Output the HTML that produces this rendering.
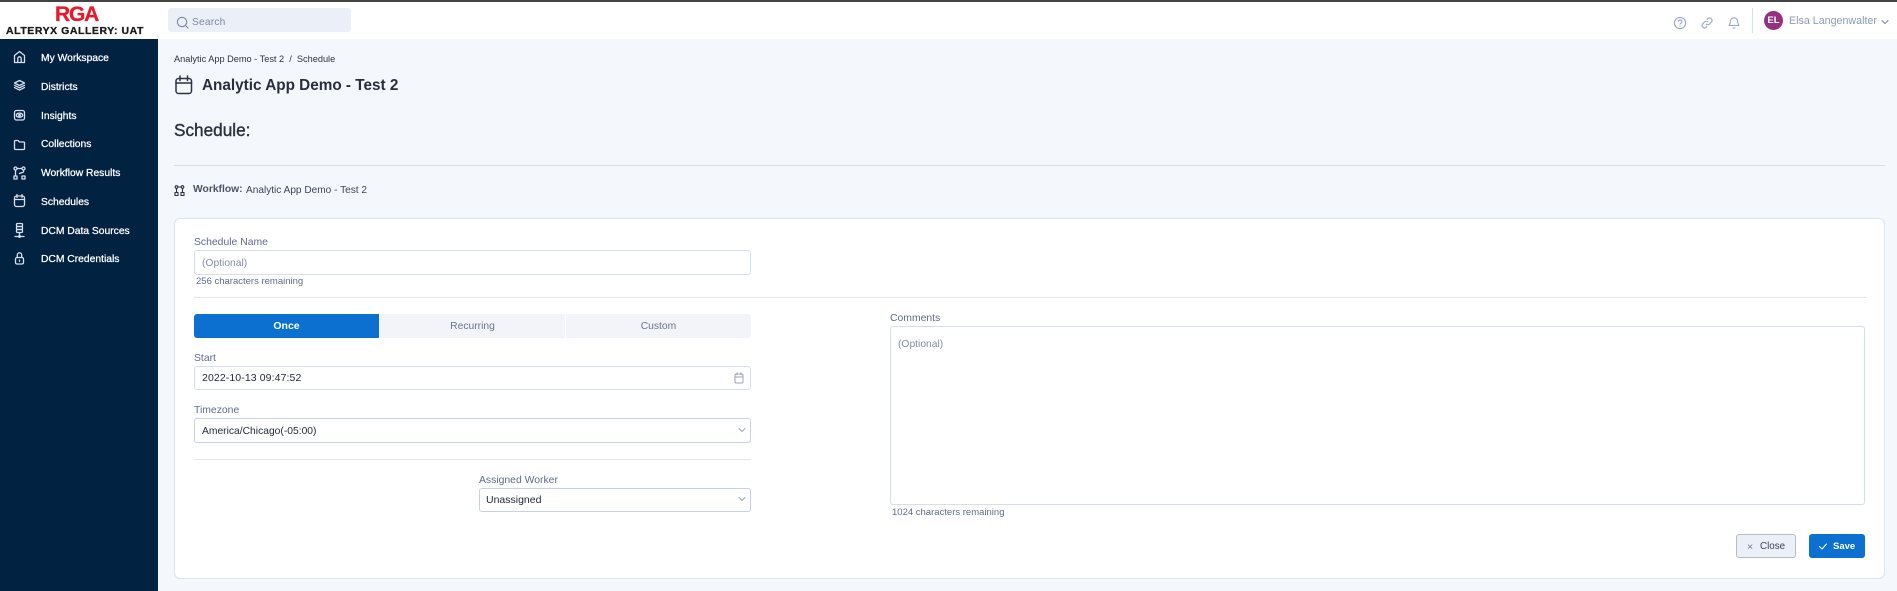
<!DOCTYPE html>
<html><head><meta charset="utf-8"><style>
html,body{margin:0;padding:0;width:1897px;height:591px;overflow:hidden;background:#f4f7fc;font-family:"Liberation Sans",sans-serif}
.a{position:absolute;white-space:nowrap}
.t{position:absolute;white-space:nowrap;line-height:14px}
.nav{color:#fff;font-size:10.300px;-webkit-text-stroke:.25px #fff;left:41px}
.lab{color:#5f6b8c;font-size:10.400px}
.box{position:absolute;box-sizing:border-box;background:#fff;border:1px solid #d5deee;border-radius:3px}
.hr{position:absolute;height:1px;background:#e3e6ee}
svg{position:absolute;fill:none;stroke-linecap:round;stroke-linejoin:round}
.nv{stroke:#d8e0ec;stroke-width:1.300;left:11px}
</style></head><body>
<div class="a" style="left:0;top:0;width:1897px;height:39px;background:#fff"></div>
<div class="a" style="left:0;top:0;width:1897px;height:2px;background:#444"></div>
<div class="t" style="left:55px;top:3px;font-size:21px;line-height:24px;font-weight:bold;color:#e8192c;letter-spacing:-1.200px;-webkit-text-stroke:.3px #e8192c">RGA</div>
<div class="t" style="left:6px;top:24px;font-size:10.500px;font-weight:bold;color:#1a1a1a;letter-spacing:.55px;line-height:14px;-webkit-text-stroke:.3px #1a1a1a">ALTERYX GALLERY: UAT</div>
<div class="a" style="left:168px;top:8px;width:183px;height:24px;background:#ebeff8;border-radius:3px"></div>
<svg style="left:176px;top:16px" width="13" height="13" viewBox="0 0 13 13" stroke="#7d89a3" stroke-width="1.100"><circle cx="6" cy="6" r="4.700"/><path d="M9.500 9.500 12 12"/></svg>
<div class="t" style="left:192px;top:16px;font-size:10.200px;color:#7d89a3;letter-spacing:.2px">Search</div>

<svg style="left:1673px;top:16px" width="14" height="14" viewBox="0 0 14 14" stroke="#9aa8c2" stroke-width="1.100"><circle cx="7" cy="7" r="5.600"/><path d="M5.400 5.600a1.700 1.700 0 1 1 2.400 1.600c-.5.3-.8.6-.8 1.100M7 10.100v.1"/></svg>
<svg style="left:1700px;top:16px" width="14" height="14" viewBox="0 0 14 14" stroke="#9aa8c2" stroke-width="1.100"><path d="M6 8a2.400 2.400 0 0 0 3.500 0l2-2A2.500 2.500 0 0 0 8 2.500l-.8.8M8 6a2.400 2.400 0 0 0-3.500 0l-2 2A2.500 2.500 0 0 0 6 11.500l.8-.8"/></svg>
<svg style="left:1727px;top:15px" width="14" height="15" viewBox="0 0 14 15" stroke="#9aa8c2" stroke-width="1.100"><path d="M2 10.500h10c-1-1-1.300-2-1.300-4a3.700 3.700 0 0 0-7.400 0c0 2-.3 3-1.300 4zM6 13h2"/></svg>
<div class="a" style="left:1752px;top:8px;width:1px;height:25px;background:#d8dfec"></div>
<div class="a" style="left:1764px;top:11px;width:19px;height:19px;border-radius:50%;background:#94307f;color:#fff;font-size:9.500px;font-weight:bold;line-height:19px;text-align:center">EL</div>
<div class="t" style="left:1789px;top:14px;font-size:10.700px;color:#8d9bb8">Elsa Langenwalter</div>
<svg style="left:1881px;top:19px" width="8" height="6" viewBox="0 0 8 6" stroke="#7d89a3" stroke-width="1.100"><path d="M1 1.500 4 4.500 7 1.500"/></svg>

<div class="a" style="left:0;top:39px;width:158px;height:552px;background:#012241"></div>
<svg class="nv" style="top:49px" width="17" height="16" viewBox="0 0 17 16"><path d="M3.500 13.500V6.500L8.500 2.500 13.500 6.500V13.500zM6.800 13.500V9.500a1.700 1.700 0 0 1 3.400 0V13.500"/></svg>
<svg class="nv" style="top:78px" width="17" height="15" viewBox="0 0 17 15" stroke-width="1.100"><path d="M8.500 2.500 13.500 5 8.500 7.500 3.500 5zM3.500 7.300l5 2.500 5-2.500M3.500 9.600l5 2.500 5-2.500"/></svg>
<svg class="nv" style="top:108px" width="17" height="15" viewBox="0 0 17 15"><rect x="3.500" y="2.500" width="10" height="9.500" rx="2"/><ellipse cx="8.500" cy="7.200" rx="3.200" ry="2.100"/><circle cx="8.500" cy="7.200" r=".8"/></svg>
<svg class="nv" style="top:137px" width="17" height="15" viewBox="0 0 17 15"><path d="M3.500 4.500a1 1 0 0 1 1-1h2.500l1.500 1.500H12.500a1 1 0 0 1 1 1V11.500a1 1 0 0 1-1 1H4.500a1 1 0 0 1-1-1z"/></svg>
<svg class="nv" style="top:165px" width="17" height="17" viewBox="0 0 17 17" stroke-width="1.200"><circle cx="4.500" cy="3.500" r="1.500"/><circle cx="12.500" cy="3.500" r="1.500"/><rect x="3" y="11" width="3" height="3"/><rect x="11" y="11" width="3" height="3"/><path d="M4.500 5.500V10M12.500 5.500V7l-4 1.500M6.500 3.500h4"/></svg>
<svg class="nv" style="top:193px" width="17" height="16" viewBox="0 0 17 16"><rect x="3.500" y="3" width="10" height="10.500" rx="2"/><path d="M3.500 6.500h10M6 1.500v3M11 1.500v3"/></svg>
<svg class="nv" style="top:222px" width="17" height="17" viewBox="0 0 17 17" stroke-width="1.100"><rect x="5.500" y="1.500" width="6" height="3" rx="1"/><rect x="5.500" y="4.500" width="6" height="3" rx="1"/><rect x="5.500" y="7.500" width="6" height="3" rx="1"/><path d="M8.500 10.500V13M4 14.500h9"/><circle cx="8.500" cy="14.500" r=".8"/></svg>
<svg class="nv" style="top:250px" width="17" height="17" viewBox="0 0 17 17"><rect x="4.500" y="7.500" width="8" height="6.500" rx="1.500"/><path d="M6.300 7.500V5a2.200 2.200 0 0 1 4.400 0v2.500M8.500 10.200v1"/></svg>
<div class="t nav" style="top:52px">My Workspace</div>
<div class="t nav" style="top:81px">Districts</div>
<div class="t nav" style="top:110px">Insights</div>
<div class="t nav" style="top:138px">Collections</div>
<div class="t nav" style="top:167px">Workflow Results</div>
<div class="t nav" style="top:196px">Schedules</div>
<div class="t nav" style="top:225px">DCM Data Sources</div>
<div class="t nav" style="top:253px">DCM Credentials</div>

<div class="t" style="left:174px;top:52px;font-size:9.200px;color:#2c3345">Analytic App Demo - Test 2&nbsp; /&nbsp; Schedule</div>
<svg style="left:174px;top:75px" width="20" height="20" viewBox="0 0 20 20" stroke="#2b3343" stroke-width="1.500"><rect x="2" y="3.500" width="15.500" height="15" rx="2.500"/><path d="M2 8h15.500M6 1v4.500M13.500 1v4.500"/></svg>
<div class="t" style="left:202px;top:75px;font-size:15.300px;line-height:22px;font-weight:bold;color:#272e3d">Analytic App Demo - Test 2</div>
<div class="t" style="left:174px;top:118px;font-size:17.200px;line-height:24px;color:#2a3140;-webkit-text-stroke:.4px #2a3140">Schedule:</div>
<div class="hr" style="left:174px;top:165px;width:1711px;background:#d9dee7"></div>
<svg style="left:174px;top:185px" width="11" height="11" viewBox="0 0 11 11" stroke="#2b3343" stroke-width="1.100"><circle cx="2.500" cy="2" r="1.300"/><circle cx="8.500" cy="2" r="1.300"/><rect x="1" y="7.500" width="3" height="3"/><rect x="7" y="7.500" width="3" height="3"/><path d="M2.500 3.500v4M8.500 3.500v4M4 2h3"/></svg>
<div class="t" style="left:193px;top:183px;font-size:10.300px;font-weight:bold;color:#4b5468">Workflow:</div>
<div class="t" style="left:246px;top:184px;font-size:10.100px;color:#3c4458">Analytic App Demo - Test 2</div>

<div class="box" style="left:174px;top:218px;width:1711px;height:361px;border-radius:6px;border-color:#dce4f1"></div>

<div class="t lab" style="left:194px;top:236px">Schedule Name</div>
<div class="box" style="left:194px;top:250px;width:557px;height:25px"></div>
<div class="t" style="left:202px;top:257px;font-size:10.300px;color:#848d9f">(Optional)</div>
<div class="t" style="left:196px;top:275px;font-size:9.500px;color:#5f6b8c">256 characters remaining</div>
<div class="hr" style="left:194px;top:297px;width:1672px"></div>

<div class="a" style="left:194px;top:314px;width:185px;height:24px;background:#0b70d0;border-radius:3px 0 0 3px;color:#fff;font-size:10.500px;font-weight:bold;line-height:24px;text-align:center">Once</div>
<div class="a" style="left:380px;top:314px;width:185px;height:24px;background:#f3f4f9;color:#6a7488;font-size:10.300px;line-height:26px;text-align:center">Recurring</div>
<div class="a" style="left:566px;top:314px;width:185px;height:24px;background:#f3f4f9;border-radius:0 3px 3px 0;color:#6a7488;font-size:10.300px;line-height:26px;text-align:center">Custom</div>

<div class="t lab" style="left:194px;top:352px">Start</div>
<div class="box" style="left:194px;top:366px;width:557px;height:24px"></div>
<div class="t" style="left:202px;top:371px;font-size:10.500px;color:#1f2635;letter-spacing:.1px">2022-10-13 09:47:52</div>
<svg style="left:734px;top:372px" width="10" height="12" viewBox="0 0 10 12" stroke="#9aa3b5" stroke-width="1"><rect x="1" y="2" width="8" height="9" rx="1.500"/><path d="M1 5h8M3 .8v2M7 .8v2"/></svg>

<div class="t lab" style="left:194px;top:404px">Timezone</div>
<div class="box" style="left:194px;top:418px;width:557px;height:25px;border-color:#c6d1e8"></div>
<div class="t" style="left:202px;top:425px;font-size:10.300px;color:#1f2635">America/Chicago(-05:00)</div>
<svg style="left:737px;top:427px" width="10" height="7" viewBox="0 0 10 7" stroke="#9aa3b5" stroke-width="1"><path d="M2 1.500 5 4.500 8 1.500"/></svg>
<div class="hr" style="left:194px;top:459px;width:557px"></div>

<div class="t lab" style="left:479px;top:474px">Assigned Worker</div>
<div class="box" style="left:479px;top:488px;width:272px;height:24px;border-color:#c6d1e8"></div>
<div class="t" style="left:486px;top:493px;font-size:10.500px;color:#1f2635">Unassigned</div>
<svg style="left:737px;top:496px" width="10" height="7" viewBox="0 0 10 7" stroke="#9aa3b5" stroke-width="1"><path d="M2 1.500 5 4.500 8 1.500"/></svg>

<div class="t lab" style="left:890px;top:312px">Comments</div>
<div class="box" style="left:890px;top:326px;width:975px;height:179px"></div>
<div class="t" style="left:898px;top:338px;font-size:10.300px;color:#848d9f">(Optional)</div>
<div class="t" style="left:892px;top:506px;font-size:9.500px;color:#5f6b8c">1024 characters remaining</div>

<div class="box" style="left:1736px;top:534px;width:60px;height:24px;background:#ebeff8;border-color:#b4bbc9"></div>
<div class="t" style="left:1747px;top:540px;font-size:10.500px;color:#6a7488">×</div>
<div class="t" style="left:1760px;top:540px;font-size:9.800px;color:#3a4254">Close</div>
<div class="a" style="left:1809px;top:534px;width:56px;height:24px;background:#0b70d0;border-radius:3px"></div>
<svg style="left:1818px;top:542px" width="10" height="9" viewBox="0 0 10 9" stroke="#fff" stroke-width="1"><path d="M1.500 4.500 4 7 8.500 2"/></svg>
<div class="t" style="left:1833px;top:540px;font-size:9.500px;font-weight:bold;color:#fff">Save</div>
</body></html>
